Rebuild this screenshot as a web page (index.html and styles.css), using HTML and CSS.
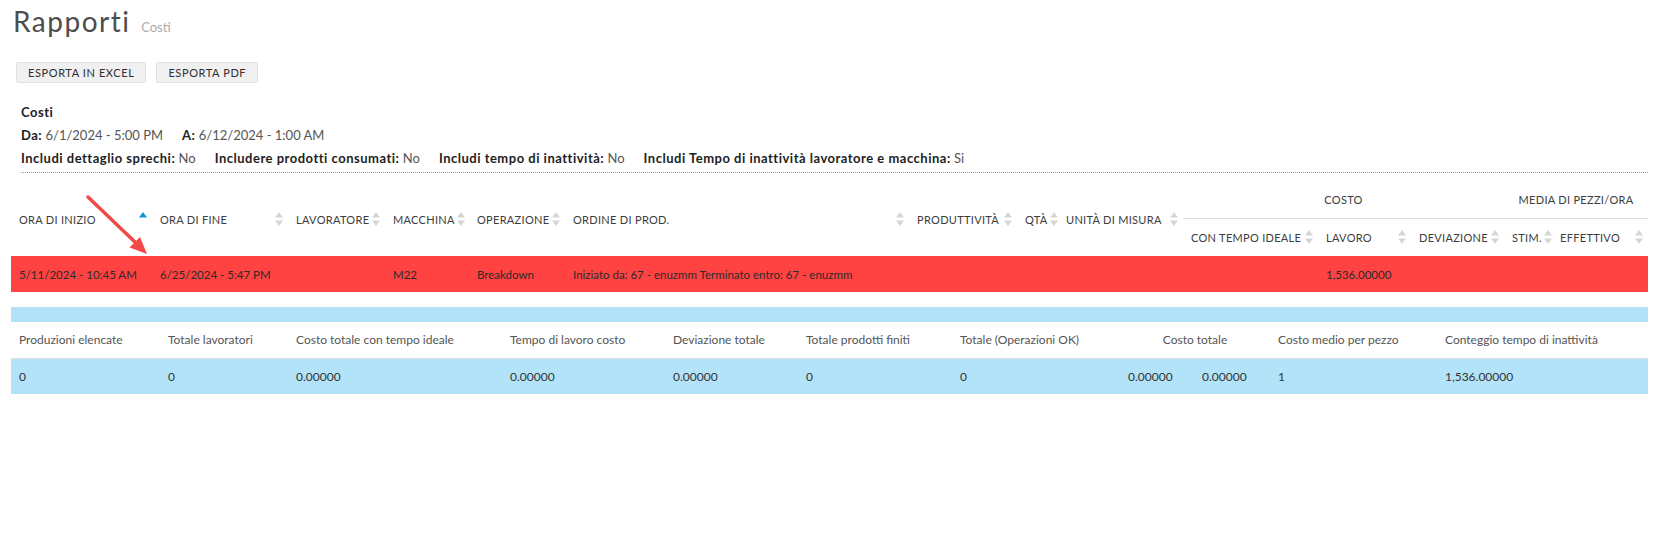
FILE: index.html
```html
<!DOCTYPE html>
<html lang="it">
<head>
<meta charset="utf-8">
<title>Rapporti - Costi</title>
<link rel="stylesheet" href="styles.css">
</head>
<body>
<div class="page">
  <h1 class="title">Rapporti <small class="subtitle">Costi</small></h1>

  <div class="toolbar">
    <button class="btn">Esporta in Excel</button>
    <button class="btn">Esporta PDF</button>
  </div>

  <div class="info">
    <div class="info-line"><span class="lbl">Costi</span></div>
    <div class="info-line">
      <span class="item"><span class="lbl">Da:</span> <span class="val">6/1/2024 - 5:00 PM</span></span>
      <span class="item"><span class="lbl">A:</span> <span class="val">6/12/2024 - 1:00 AM</span></span>
    </div>
    <div class="info-line">
      <span class="item"><span class="lbl">Includi dettaglio sprechi:</span> <span class="val">No</span></span>
      <span class="item"><span class="lbl">Includere prodotti consumati:</span> <span class="val">No</span></span>
      <span class="item"><span class="lbl">Includi tempo di inattività:</span> <span class="val">No</span></span>
      <span class="item"><span class="lbl">Includi Tempo di inattività lavoratore e macchina:</span> <span class="val">Si</span></span>
    </div>
  </div>

  <table class="grid">
    <colgroup>
      <col class="w141"><col class="w136"><col class="w97"><col class="w84"><col class="w96"><col class="w344"><col class="w108"><col class="w41"><col class="w125"><col class="w135"><col class="w93"><col class="w93"><col class="w48"><col class="w96">
    </colgroup>
    <thead>
      <tr class="hr1">
        <th rowspan="2"><div class="thi"><span>Ora di inizio</span><svg class="sort" viewBox="0 0 8 14"><polygon class="up active" points="4,0 8,5.5 0,5.5"/></svg></div></th>
        <th rowspan="2"><div class="thi"><span>Ora di fine</span><svg class="sort" viewBox="0 0 8 14"><polygon class="up" points="4,0 8,5.5 0,5.5"/><polygon class="dn" points="0,8.5 8,8.5 4,14"/></svg></div></th>
        <th rowspan="2"><div class="thi"><span>Lavoratore</span><svg class="sort" viewBox="0 0 8 14"><polygon class="up" points="4,0 8,5.5 0,5.5"/><polygon class="dn" points="0,8.5 8,8.5 4,14"/></svg></div></th>
        <th rowspan="2"><div class="thi"><span>Macchina</span><svg class="sort" viewBox="0 0 8 14"><polygon class="up" points="4,0 8,5.5 0,5.5"/><polygon class="dn" points="0,8.5 8,8.5 4,14"/></svg></div></th>
        <th rowspan="2"><div class="thi"><span>Operazione</span><svg class="sort" viewBox="0 0 8 14"><polygon class="up" points="4,0 8,5.5 0,5.5"/><polygon class="dn" points="0,8.5 8,8.5 4,14"/></svg></div></th>
        <th rowspan="2"><div class="thi"><span>Ordine di prod.</span><svg class="sort" viewBox="0 0 8 14"><polygon class="up" points="4,0 8,5.5 0,5.5"/><polygon class="dn" points="0,8.5 8,8.5 4,14"/></svg></div></th>
        <th rowspan="2"><div class="thi"><span>Produttività</span><svg class="sort" viewBox="0 0 8 14"><polygon class="up" points="4,0 8,5.5 0,5.5"/><polygon class="dn" points="0,8.5 8,8.5 4,14"/></svg></div></th>
        <th rowspan="2"><div class="thi"><span>Qtà</span><svg class="sort" viewBox="0 0 8 14"><polygon class="up" points="4,0 8,5.5 0,5.5"/><polygon class="dn" points="0,8.5 8,8.5 4,14"/></svg></div></th>
        <th rowspan="2"><div class="thi"><span>Unità di misura</span><svg class="sort" viewBox="0 0 8 14"><polygon class="up" points="4,0 8,5.5 0,5.5"/><polygon class="dn" points="0,8.5 8,8.5 4,14"/></svg></div></th>
        <th colspan="3" class="group">Costo</th>
        <th colspan="2" class="group">Media di pezzi/ora</th>
      </tr>
      <tr class="hr2">
        <th><div class="thi"><span>Con tempo ideale</span><svg class="sort" viewBox="0 0 8 14"><polygon class="up" points="4,0 8,5.5 0,5.5"/><polygon class="dn" points="0,8.5 8,8.5 4,14"/></svg></div></th>
        <th><div class="thi"><span>Lavoro</span><svg class="sort" viewBox="0 0 8 14"><polygon class="up" points="4,0 8,5.5 0,5.5"/><polygon class="dn" points="0,8.5 8,8.5 4,14"/></svg></div></th>
        <th><div class="thi"><span>Deviazione</span><svg class="sort" viewBox="0 0 8 14"><polygon class="up" points="4,0 8,5.5 0,5.5"/><polygon class="dn" points="0,8.5 8,8.5 4,14"/></svg></div></th>
        <th><div class="thi"><span>Stim.</span><svg class="sort" viewBox="0 0 8 14"><polygon class="up" points="4,0 8,5.5 0,5.5"/><polygon class="dn" points="0,8.5 8,8.5 4,14"/></svg></div></th>
        <th><div class="thi"><span>Effettivo</span><svg class="sort" viewBox="0 0 8 14"><polygon class="up" points="4,0 8,5.5 0,5.5"/><polygon class="dn" points="0,8.5 8,8.5 4,14"/></svg></div></th>
      </tr>
    </thead>
    <tbody>
      <tr class="row-alert">
        <td>5/11/2024 - 10:45 AM</td>
        <td>6/25/2024 - 5:47 PM</td>
        <td></td>
        <td>M22</td>
        <td>Breakdown</td>
        <td>Iniziato da: 67 - enuzmm Terminato entro: 67 - enuzmm</td>
        <td></td>
        <td></td>
        <td></td>
        <td></td>
        <td>1,536.00000</td>
        <td></td>
        <td></td>
        <td></td>
      </tr>
    </tbody>
  </table>

  <div class="bluebar"></div>

  <table class="summary">
    <colgroup>
      <col class="w149"><col class="w128"><col class="w214"><col class="w163"><col class="w133"><col class="w154"><col class="w168"><col class="w74"><col class="w76"><col class="w167"><col class="w211">
    </colgroup>
    <thead>
      <tr>
        <th>Produzioni elencate</th>
        <th>Totale lavoratori</th>
        <th>Costo totale con tempo ideale</th>
        <th>Tempo di lavoro costo</th>
        <th>Deviazione totale</th>
        <th>Totale prodotti finiti</th>
        <th>Totale (Operazioni OK)</th>
        <th colspan="2" class="center">Costo totale</th>
        <th>Costo medio per pezzo</th>
        <th>Conteggio tempo di inattività</th>
      </tr>
    </thead>
    <tbody>
      <tr>
        <td>0</td>
        <td>0</td>
        <td>0.00000</td>
        <td>0.00000</td>
        <td>0.00000</td>
        <td>0</td>
        <td>0</td>
        <td>0.00000</td>
        <td>0.00000</td>
        <td>1</td>
        <td>1,536.00000</td>
      </tr>
    </tbody>
  </table>

  <svg class="annot" viewBox="0 0 1659 539" width="1659" height="539">
    <line x1="88" y1="197" x2="136" y2="243" stroke="#f24848" stroke-width="3.5" stroke-linecap="round"/>
    <polygon points="147,254 129.5,247.5 140,237" fill="#f24848"/>
  </svg>
</div>
</body>
</html>
```

FILE: styles.css
```css
* { box-sizing: border-box; }

html, body {
  margin: 0;
  padding: 0;
  background: #ffffff;
}

body {
  font-family: "Lato", "Open Sans", sans-serif;
  color: #333333;
}

.page {
  position: relative;
  padding: 4px 11px 0 11px;
  min-height: 539px;
}

.title {
  margin: 0 0 0 2px;
  height: 34px;
  font-size: 28px;
  line-height: 34px;
  font-weight: 400;
  letter-spacing: 1.5px;
  color: #4d4d4d;
}

.subtitle {
  font-size: 13px;
  line-height: 0;
  letter-spacing: 0;
  color: #aaaaaa;
  margin-left: 2px;
}

.toolbar {
  display: flex;
  gap: 10px;
  margin: 24px 0 0 5px;
}

.btn {
  height: 21px;
  padding: 0 11px;
  border: 1px solid #e2e2e2;
  border-radius: 2px;
  background: #f0f0f0;
  font-family: "Lato", "Open Sans", sans-serif;
  font-size: 11px;
  letter-spacing: 0.6px;
  text-transform: uppercase;
  color: #2e2e2e;
  line-height: 19px;
}

.info {
  margin: 18px 0 0 10px;
  padding-bottom: 2px;
  border-bottom: 1px dotted #9a9a9a;
  font-size: 13px;
}

.info-line {
  display: flex;
  gap: 19px;
  height: 23px;
  line-height: 23px;
  white-space: nowrap;
}

.lbl {
  font-weight: 700;
  letter-spacing: 0.5px;
  color: #1e1e1e;
}

.val {
  color: #555555;
}

.grid, .summary {
  width: 100%;
  table-layout: fixed;
  border-collapse: collapse;
  border-spacing: 0;
}

.grid {
  margin-top: 9px;
}

.grid th {
  font-size: 11px;
  font-weight: 400;
  letter-spacing: 0.3px;
  text-transform: uppercase;
  color: #3c3c3c;
  text-align: left;
  padding: 0 4px 0 8px;
  vertical-align: middle;
  white-space: nowrap;
}

.grid .hr1 { height: 36px; }
.grid .hr2 { height: 38px; }

.grid th.group {
  text-align: center;
  border-bottom: 1px solid #dddddd;
  padding: 0;
}

.thi {
  display: flex;
  align-items: center;
  justify-content: space-between;
  gap: 2px;
}

.sort {
  flex: none;
  width: 8px;
  height: 14px;
  margin-right: 1px;
}

.sort polygon { fill: #d6d6d6; }
.sort polygon.active { fill: #0696d7; }

.row-alert {
  background: #ff4242;
  height: 36px;
}

.grid td {
  font-size: 11.5px;
  color: #2b2b2b;
  padding: 0 8px;
  white-space: nowrap;
  overflow: hidden;
}

.bluebar {
  height: 15px;
  margin-top: 15px;
  background: #b3e3f9;
}

.summary th {
  height: 36px;
  font-size: 12px;
  font-weight: 400;
  color: #555555;
  text-align: left;
  padding: 0 8px;
  border-bottom: 1px solid #dddddd;
  white-space: nowrap;
}

.summary th.center { text-align: center; }

.summary tbody tr {
  background: #b3e3f9;
  height: 36px;
}

.summary td {
  font-size: 12px;
  color: #333333;
  padding: 0 8px;
  white-space: nowrap;
}

.w141 { width: 141px; }
.w136 { width: 136px; }
.w97 { width: 97px; }
.w84 { width: 84px; }
.w96 { width: 96px; }
.w344 { width: 344px; }
.w108 { width: 108px; }
.w41 { width: 41px; }
.w125 { width: 125px; }
.w135 { width: 135px; }
.w93 { width: 93px; }
.w48 { width: 48px; }
.w149 { width: 149px; }
.w128 { width: 128px; }
.w214 { width: 214px; }
.w163 { width: 163px; }
.w133 { width: 133px; }
.w154 { width: 154px; }
.w168 { width: 168px; }
.w74 { width: 74px; }
.w76 { width: 76px; }
.w167 { width: 167px; }
.w211 { width: 211px; }

.annot {
  position: absolute;
  left: 0;
  top: 0;
  pointer-events: none;
}
```
